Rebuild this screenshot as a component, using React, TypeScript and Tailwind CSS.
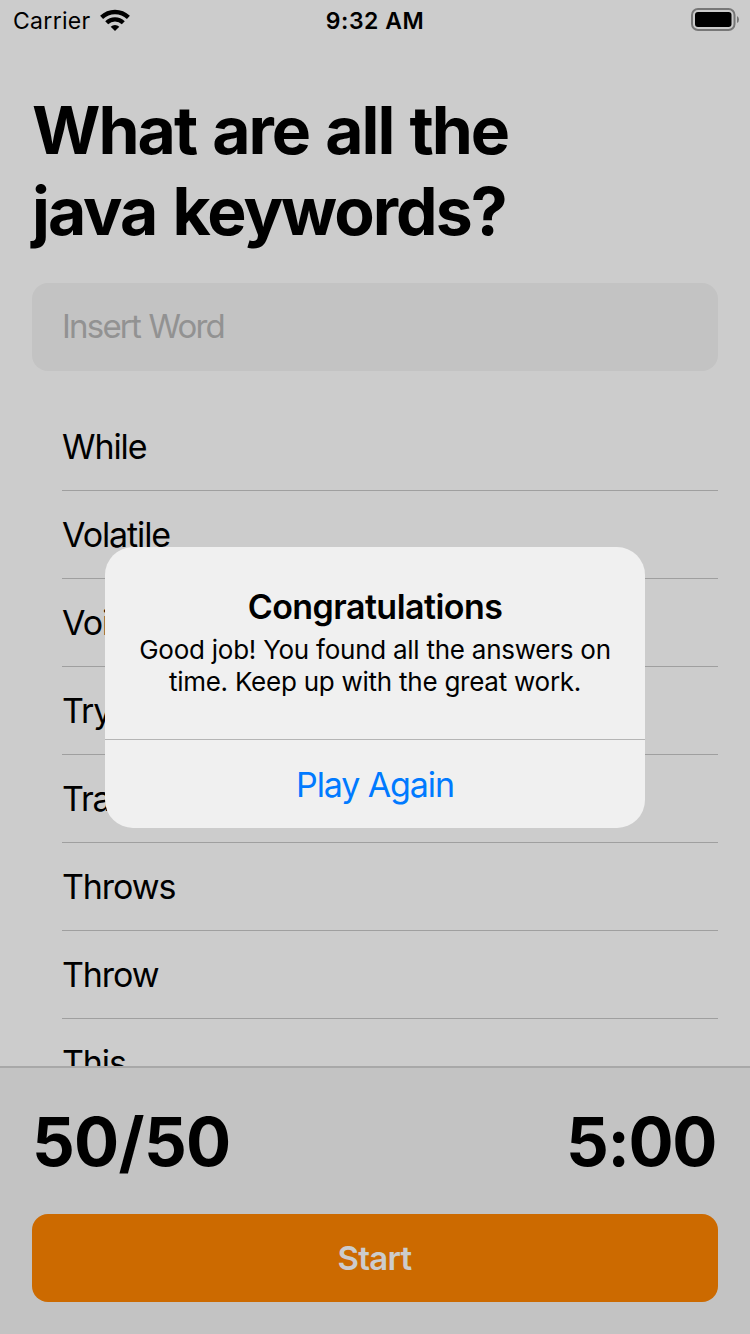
import React from "react";

const words = ["While", "Volatile", "Void", "Try", "Transient", "Throws", "Throw", "This"];

export default function App() {
  return (
    <div className="relative flex h-[1334px] w-[750px] flex-col overflow-hidden bg-[#cccccc] font-['Inter',sans-serif] text-black">
      <header className="grid h-10 shrink-0 grid-cols-3 items-center pl-[13px] pr-[11px] text-[23px] leading-[38px]">
        <div className="flex items-center gap-[9px]">
          <span className="pt-[2px] tracking-[0.3px]">Carrier</span>
          <svg width="30" height="22" viewBox="0 0 30 22">
            <path d="M15 22 10.700 17.700a6.200 6.200 0 0 1 8.600 0Z" />
            <path d="M6.700 13.700a12 12 0 0 1 16.600 0M1.600 8.400a19.300 19.300 0 0 1 26.800 0" fill="none" stroke="black" strokeWidth="4.300" />
          </svg>
        </div>
        <span className="pr-[2px] pt-[2px] text-center font-semibold tracking-[0.5px]">9:32 AM</span>
        <svg className="justify-self-end" width="48" height="24" viewBox="0 0 48 24">
          <rect x="1" y="1" width="42.500" height="21" rx="6" fill="none" stroke="#777" strokeWidth="2" />
          <rect x="4" y="4" width="36.500" height="15" rx="3" />
          <path d="M46 8v7q2-1 2-3.500t-2-3.500Z" fill="#777" />
        </svg>
      </header>
      <h1 className="ml-8 mt-[50px] shrink-0 text-[66px] font-bold leading-[81px] tracking-[-2px] [word-spacing:2.5px]">
        What are all the
        <br />
        java keywords?
      </h1>
      <div className="mx-8 mt-[31px] flex h-[88px] shrink-0 items-center rounded-2xl bg-[#c3c3c3] px-[30px] pb-px text-[33px] tracking-[-1.8px] text-[#929292] [word-spacing:1px]">Insert Word</div>
      <ul className="ml-[62px] mr-8 mt-8 min-h-0 flex-1 overflow-hidden text-[34px] tracking-[-1.1px]">
        {words.map((word) => (
          <li key={word} className="flex h-[88px] items-center border-b border-[#9f9f9f]">{word}</li>
        ))}
      </ul>
      <footer className="h-[268px] shrink-0 border-t-2 border-[#a8a8a8] bg-[#c3c3c3] px-8">
        <div className="flex h-[146px] items-center justify-between pt-[2px] text-[67px] font-bold">
          <span className="tracking-[-0.7px]">50/50</span>
          <span className="pr-[2px] tracking-[-1.400px]">5:00</span>
        </div>
        <button className="h-[88px] w-full rounded-2xl bg-[#cc6a00] pt-[2px] pr-px text-[33px] font-semibold tracking-[-0.7px] text-[#cccccc]">Start</button>
      </footer>
      <section className="absolute left-[105px] top-[547px] flex h-[281px] w-[540px] flex-col rounded-[28px] bg-[#f0f0f0] text-center">
        <div className="h-[193px] border-b border-[#b5b5b5] pt-[39px]">
          <h2 className="text-[34px] font-semibold leading-[41px] tracking-[-0.550px]">Congratulations</h2>
          <p className="mt-[7px] text-[26px] leading-8 tracking-[-0.250px]">
            Good job! You found all the answers on
            <br />
            time. Keep up with the great work.
          </p>
        </div>
        <button className="flex-1 text-[34px] tracking-[-1.1px] text-[#007aff]">Play Again</button>
      </section>
    </div>
  );
}
